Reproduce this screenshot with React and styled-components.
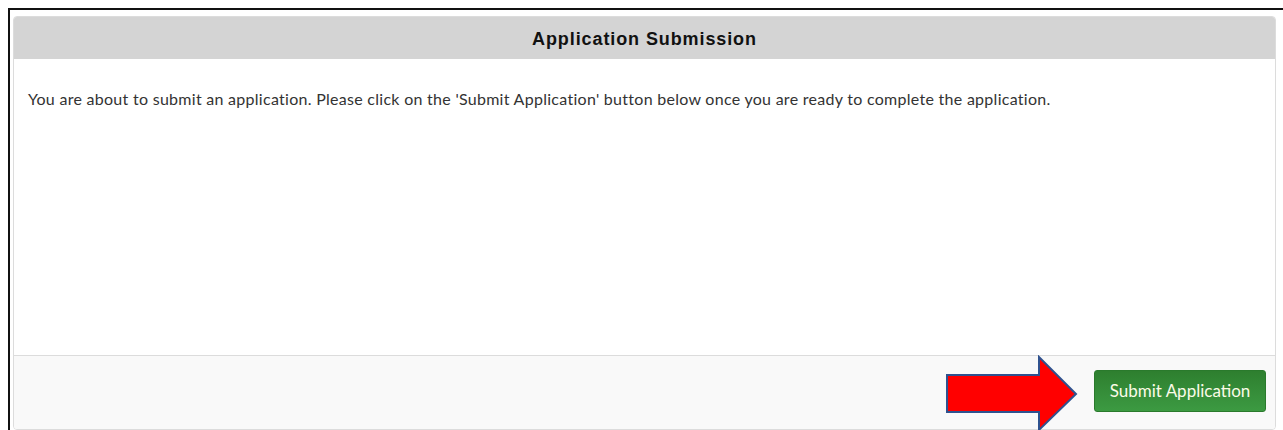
import React from "react";
import styled, { createGlobalStyle } from "styled-components";

const GlobalStyle = createGlobalStyle`
  html, body {
    margin: 0;
    padding: 0;
    background: #ffffff;
    overflow: hidden;
  }
`;

const Frame = styled.div`
  position: relative;
  margin: 8px 0 0 8px;
  height: 440px;
  border-top: 2px solid #111;
  border-left: 2px solid #111;
  padding: 6px 0 0 3px;
  box-sizing: border-box;
`;

const Panel = styled.div`
  width: 1263px;
  height: 414px;
  border: 1px solid #dcdcdc;
  border-radius: 4px;
  overflow: hidden;
  display: flex;
  flex-direction: column;
  box-sizing: border-box;
  background: #fff;
`;

const Header = styled.div`
  height: 42px;
  padding-top: 3px;
  box-sizing: border-box;
  background: #d4d4d4;
  display: flex;
  align-items: center;
  justify-content: center;
  font-family: "Liberation Sans", Arial, sans-serif;
  font-weight: bold;
  font-size: 18px;
  letter-spacing: 0.9px;
  color: #111;
`;

const Body = styled.div`
  flex: 1;
  padding: 30px 14px 0;
  font-family: Lato, "Open Sans", sans-serif;
  font-size: 16px;
  letter-spacing: 0.28px;
  line-height: 20px;
  color: #333;
`;

const Footer = styled.div`
  height: 74px;
  background: #f9f9f9;
  border-top: 1px solid #dcdcdc;
  display: flex;
  align-items: center;
  justify-content: flex-end;
  padding: 0 9px 3px 0;
  box-sizing: border-box;
`;

const SubmitButton = styled.button`
  width: 172px;
  height: 42px;
  border: 1px solid #2a7a2c;
  border-radius: 3px;
  background: linear-gradient(#2e7f2f, #3c9a42);
  color: #fbfbe8;
  font-family: Lato, "Open Sans", sans-serif;
  font-size: 17px;
  padding-bottom: 2px;
  cursor: pointer;
`;

const Arrow = styled.svg`
  position: absolute;
  left: 935px;
  top: 345px;
`;

const App = () => (
  <>
    <GlobalStyle />
    <Frame>
      <Panel>
        <Header>Application Submission</Header>
        <Body>
          You are about to submit an application. Please click on the 'Submit
          Application' button below once you are ready to complete the
          application.
        </Body>
        <Footer>
          <SubmitButton>Submit Application</SubmitButton>
        </Footer>
      </Panel>
      {/* pointer arrow */}
      <Arrow width="140" height="80" viewBox="0 0 140 80">
        <polygon
          points="2,20 94,20 94,2 131,39 94,75 94,57 2,57"
          fill="#ff0000"
          stroke="#2f528f"
          strokeWidth="2"
        />
      </Arrow>
    </Frame>
  </>
);

export default App;
